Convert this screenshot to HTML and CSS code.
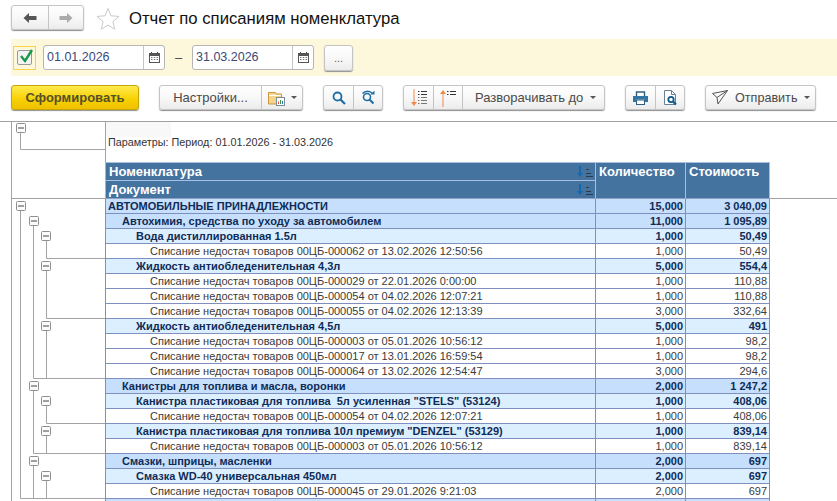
FILE: index.html
```html
<!DOCTYPE html>
<html lang="ru">
<head>
<meta charset="utf-8">
<title>Отчет по списаниям номенклатура</title>
<link rel="stylesheet" href="styles.css">
</head>
<body>
<header class="top">
  <div class="btn nav">
    <span class="seg w37"><svg width="14" height="12" viewBox="0 0 14 12"><path d="M0.5 6 6 1v3h7.5v4H6v3z" fill="#555"/></svg></span>
    <span class="seg w36"><svg width="14" height="12" viewBox="0 0 14 12"><path d="M13.5 6 8 1v3H.5v4H8v3z" fill="#ababab"/></svg></span>
  </div>
  <svg class="star" width="24" height="23" viewBox="0 0 24 23"><path d="M12 1.5l3 7.3 7.9.6-6 5.1 1.900 7.700L12 18.100l-6.800 4.100 1.900-7.700-6-5.100 7.900-.6z" fill="#fff" stroke="#c9c9c9"/></svg>
  <h1 class="title">Отчет по списаниям номенклатура</h1>
</header>

<section class="filter">
  <span class="check"><span class="checkbox"><svg width="16" height="15" viewBox="0 0 16 15"><path d="M3 7l4 5 7-11" fill="none" stroke="#17984a" stroke-width="2.400"/></svg></span></span>
  <div class="date"><span class="date-text">01.01.2026</span><span class="date-icon"><svg width="11" height="11" viewBox="0 0 11 11"><path d="M2.500 0v2M8.500 0v2" stroke="#444"/><rect x=".5" y="1.500" width="10" height="9" fill="#fff" stroke="#555"/><path d="M0 1h11v3H0z" fill="#555"/><path d="M2 5.500h1.500M4.800 5.500h1.500M7.600 5.500h1.500M2 7.500h1.500M4.800 7.500h1.500M7.600 7.500h1.500" stroke="#777"/></svg></span></div>
  <span class="dash">–</span>
  <div class="date"><span class="date-text">31.03.2026</span><span class="date-icon"><svg width="11" height="11" viewBox="0 0 11 11"><path d="M2.500 0v2M8.500 0v2" stroke="#444"/><rect x=".5" y="1.500" width="10" height="9" fill="#fff" stroke="#555"/><path d="M0 1h11v3H0z" fill="#555"/><path d="M2 5.500h1.500M4.800 5.500h1.500M7.600 5.500h1.500M2 7.500h1.500M4.800 7.500h1.500M7.600 7.500h1.500" stroke="#777"/></svg></span></div>
  <div class="btn dots">...</div>
</section>

<nav class="toolbar">
  <div class="btn primary">Сформировать</div>
  <div class="btn">
    <span class="seg w102">Настройки...</span>
    <span class="seg w42 gapped">
      <svg width="18" height="16" viewBox="0 0 18 16"><path d="M.5 2.500h7l1 1.500h5v10H.5z" fill="#f5d48c" stroke="#c9973f"/><path d="M1 5.500h12" stroke="#fff"/><rect x="8.500" y="7.500" width="8" height="8" fill="#fff" stroke="#7a8a99"/><path d="M10.500 14v-2.500" stroke="#d8503a"/><path d="M12.500 14v-4" stroke="#3a9a4a"/><path d="M14.500 14v-3" stroke="#3a72b8"/></svg>
      <i class="caret"></i>
    </span>
  </div>
  <div class="btn">
    <span class="seg w30"><svg width="14" height="14" viewBox="0 0 14 14"><circle cx="5.500" cy="5.500" r="4" fill="none" stroke="#1c6ea4" stroke-width="1.800"/><path d="M8.500 8.500l4.500 4.500" stroke="#1c6ea4" stroke-width="2.200"/></svg></span>
    <span class="seg w30"><svg width="15" height="15" viewBox="0 0 15 15"><circle cx="6" cy="7" r="3.500" fill="none" stroke="#1c6ea4" stroke-width="1.600"/><path d="M8.500 9.500l4 4" stroke="#1c6ea4" stroke-width="2"/><path d="M1.500 3.500C4 0.500 9 .5 11.500 3.500" fill="none" stroke="#1c6ea4" stroke-width="1.400"/><path d="M9.500 4.500h4v-4z" fill="#1c6ea4"/></svg></span>
  </div>
  <div class="btn">
    <span class="seg w30"><svg width="16" height="18" viewBox="0 0 16 18"><path d="M3 0v15" stroke="#ef8a4a"/><path d="M0 13h6l-3 4z" fill="#ef8a4a"/><path d="M7 2.500h1.500M10 2.500h6M7 5.500h1.500M10 5.500h6" stroke="#333"/><path d="M7 8.500h1.500M10 8.500h6M7 11.500h1.500M10 11.500h6M7 14.500h1.500M10 14.500h6" stroke="#777"/></svg></span>
    <span class="seg w30 up"><svg width="16" height="18" viewBox="0 0 16 18"><path d="M3 3v15" stroke="#ef8a4a"/><path d="M0 5h6l-3-4z" fill="#ef8a4a"/><path d="M7 2.500h1.500M10 2.500h6M7 5.500h1.500M10 5.500h6" stroke="#333"/></svg></span>
    <span class="seg w142">Разворачивать до<i class="caret after"></i></span>
  </div>
  <div class="btn">
    <span class="seg w30"><svg width="15" height="14" viewBox="0 0 15 14"><path d="M3.500 5V1h8v4" fill="#fff" stroke="#30607f" stroke-width="1.400"/><path d="M0 5h15v6h-3V8.500H3V11H0z" fill="#2f75a5"/><rect x="3.500" y="9" width="8" height="4.500" fill="#fff" stroke="#30607f"/></svg></span>
    <span class="seg w30"><svg width="15" height="16" viewBox="0 0 15 16"><path d="M1.500 .5h7l4 4V14.500h-11z" fill="#fff" stroke="#6a8093"/><path d="M8.500 .5v4h4" fill="none" stroke="#6a8093"/><circle cx="8" cy="9.500" r="2.700" fill="#fff" stroke="#0f5a8a" stroke-width="1.800"/><path d="M10 11.500l3 3" stroke="#0f5a8a" stroke-width="2.200"/></svg></span>
  </div>
  <div class="btn send">
    <svg width="16" height="15" viewBox="0 0 16 15"><path d="M.5 3.500L15.500 .5 6 14 5 7.500zM5 7.500L15.500 .5" fill="none" stroke="#555"/></svg>
    <span>Отправить</span>
    <i class="caret"></i>
  </div>
</nav>

<main class="report">
  <svg class="tree" width="94" height="379" viewBox="11 122 94 379">
    <g class="tree-lines">
      <path d="M11.500 122V501"/>
      <path d="M20.500 133V149.500H105"/>
      <path d="M11 198.500H105"/>
      <path d="M20.500 211V498.500H105"/>
      <path d="M33.500 226V378.500H105M33.500 391V453.500H105M33.500 466V498"/>
      <path d="M46.500 241V258.500H105M46.500 271V318.500H105M46.500 331V378M46.500 406V423.500H105M46.500 436V453M46.500 481V498"/>
    </g>
    <g class="tree-box">
      <rect x="16.500" y="123.500" width="9" height="9" rx="1"/><path d="M18 128h6"/>
      <rect x="16.500" y="201.500" width="9" height="9" rx="1"/><path d="M18 206h6"/>
      <rect x="29.500" y="216.500" width="9" height="9" rx="1"/><path d="M31 221h6"/>
      <rect x="41.500" y="231.500" width="9" height="9" rx="1"/><path d="M43 236h6"/>
      <rect x="41.500" y="261.500" width="9" height="9" rx="1"/><path d="M43 266h6"/>
      <rect x="41.500" y="321.500" width="9" height="9" rx="1"/><path d="M43 326h6"/>
      <rect x="29.500" y="381.500" width="9" height="9" rx="1"/><path d="M31 386h6"/>
      <rect x="41.500" y="396.500" width="9" height="9" rx="1"/><path d="M43 401h6"/>
      <rect x="41.500" y="426.500" width="9" height="9" rx="1"/><path d="M43 431h6"/>
      <rect x="29.500" y="456.500" width="9" height="9" rx="1"/><path d="M31 461h6"/>
      <rect x="41.500" y="471.500" width="9" height="9" rx="1"/><path d="M43 476h6"/>
    </g>
  </svg>

  <div class="sheet">
    <div class="params">
      <div class="params-blank"></div>
      <p class="params-text">Параметры: Период: 01.01.2026 - 31.03.2026</p>
    </div>
    <div class="head">
      <div class="hcell hname first">Номенклатура<svg width="17" height="12" viewBox="0 0 17 12"><path d="M3 0v8" stroke="#1468b0" stroke-width="2"/><path d="M0 7h6l-3 4z" fill="#1468b0"/><path d="M9 3.500h3M9 7.500h5M9 10.500h7" stroke="#2b3b4b"/></svg></div>
      <div class="hcell hnum qty">Количество</div>
      <div class="hcell hnum cost">Стоимость</div>
      <div class="hcell hname second">Документ<svg width="17" height="12" viewBox="0 0 17 12"><path d="M3 0v8" stroke="#1468b0" stroke-width="2"/><path d="M0 7h6l-3 4z" fill="#1468b0"/><path d="M9 3.500h3M9 7.500h5M9 10.500h7" stroke="#2b3b4b"/></svg></div>
    </div>
    <div class="row l0"><span>АВТОМОБИЛЬНЫЕ ПРИНАДЛЕЖНОСТИ</span><span>15,000</span><span>3 040,09</span></div>
    <div class="row l1"><span>Автохимия, средства по уходу за автомобилем</span><span>11,000</span><span>1 095,89</span></div>
    <div class="row l2"><span>Вода дистиллированная 1.5л</span><span>1,000</span><span>50,49</span></div>
    <div class="row l3"><span>Списание недостач товаров 00ЦБ-000062 от 13.02.2026 12:50:56</span><span>1,000</span><span>50,49</span></div>
    <div class="row l2"><span>Жидкость антиобледенительная 4,3л</span><span>5,000</span><span>554,4</span></div>
    <div class="row l3"><span>Списание недостач товаров 00ЦБ-000029 от 22.01.2026 0:00:00</span><span>1,000</span><span>110,88</span></div>
    <div class="row l3"><span>Списание недостач товаров 00ЦБ-000054 от 04.02.2026 12:07:21</span><span>1,000</span><span>110,88</span></div>
    <div class="row l3"><span>Списание недостач товаров 00ЦБ-000055 от 04.02.2026 12:13:39</span><span>3,000</span><span>332,64</span></div>
    <div class="row l2"><span>Жидкость антиобледенительная 4,5л</span><span>5,000</span><span>491</span></div>
    <div class="row l3"><span>Списание недостач товаров 00ЦБ-000003 от 05.01.2026 10:56:12</span><span>1,000</span><span>98,2</span></div>
    <div class="row l3"><span>Списание недостач товаров 00ЦБ-000017 от 13.01.2026 16:59:54</span><span>1,000</span><span>98,2</span></div>
    <div class="row l3"><span>Списание недостач товаров 00ЦБ-000064 от 13.02.2026 12:54:47</span><span>3,000</span><span>294,6</span></div>
    <div class="row l1"><span>Канистры для топлива и масла, воронки</span><span>2,000</span><span>1 247,2</span></div>
    <div class="row l2"><span>Канистра пластиковая для топлива&nbsp; 5л усиленная "STELS" (53124)</span><span>1,000</span><span>408,06</span></div>
    <div class="row l3"><span>Списание недостач товаров 00ЦБ-000054 от 04.02.2026 12:07:21</span><span>1,000</span><span>408,06</span></div>
    <div class="row l2"><span>Канистра пластиковая для топлива 10л премиум "DENZEL" (53129)</span><span>1,000</span><span>839,14</span></div>
    <div class="row l3"><span>Списание недостач товаров 00ЦБ-000003 от 05.01.2026 10:56:12</span><span>1,000</span><span>839,14</span></div>
    <div class="row l1"><span>Смазки, шприцы, масленки</span><span>2,000</span><span>697</span></div>
    <div class="row l2"><span>Смазка WD-40 универсальная 450мл</span><span>2,000</span><span>697</span></div>
    <div class="row l3"><span>Списание недостач товаров 00ЦБ-000045 от 29.01.2026 9:21:03</span><span>2,000</span><span>697</span></div>
    <div class="row l1"><span></span><span></span><span></span></div>
  </div>
  <div class="filler"></div>
</main>
</body>
</html>
```

FILE: styles.css
```css
* { box-sizing: border-box; }
html, body { margin: 0; height: 501px; overflow: hidden; background: #fff; }
body { font-family: "Liberation Sans", Arial, sans-serif; color: #333; }

.top { height: 39px; padding: 5px 0 0 11px; display: flex; align-items: flex-start; }
.star { margin: 2px 0 0 12px; }
.title { margin: 3px 0 0 9px; font-size: 16.700px; line-height: 21px; font-weight: 400; color: #111; }

.btn {
  display: flex; align-items: stretch; height: 25px;
  border: 1px solid #c4c4c4; border-radius: 3px;
  background: linear-gradient(#fff, #f8f8f8 50%, #ececec);
  box-shadow: 0 1px 1px #8f8f8f;
  font-size: 13px; color: #4a4a4a;
}
.seg { display: flex; align-items: center; justify-content: center; border-left: 1px solid #c4c4c4; }
.seg:first-child { border-left: 0; }
.up { align-items: flex-start; padding-top: 3px; }
.w30 { width: 29px; }
.w36 { width: 35px; }
.w37 { width: 36px; }
.w42 { width: 41px; }
.w102 { width: 101px; }
.w142 { width: 142px; justify-content: flex-start; padding-left: 12px; }
.gapped { gap: 5px; }
.caret { display: block; width: 0; height: 0; border: 3px solid transparent; border-top: 3px solid #555; border-bottom: 0; }
.after { margin-left: 7px; }

.filter { height: 37px; margin-left: 11px; padding-left: 2px; display: flex; align-items: center; background: #fdf8dc; }
.check { width: 23px; height: 24px; border: 1px solid #f6d34a; display: flex; align-items: center; justify-content: center; margin-right: 7px; }
.checkbox { width: 15px; height: 15px; border: 1px solid #9a9a9a; border-radius: 2px; background: #f4f4f4; position: relative; }
.checkbox svg { position: absolute; left: 0; top: -2px; }
.date { width: 122px; height: 25px; display: flex; border: 1px solid #b5b5b5; border-radius: 3px; background: #fff; }
.date-text { flex: 1; padding-left: 3px; font-size: 12.500px; line-height: 23px; color: #3b4a78; }
.date-icon { width: 21px; border-left: 1px solid #c4c4c4; display: flex; align-items: center; justify-content: center; }
.dash { width: 27px; text-align: center; font-size: 13px; color: #444; }
.dots { width: 29px; height: 26px; margin-left: 10px; justify-content: center; font-size: 11px; line-height: 24px; color: #666; }

.toolbar { height: 26px; margin: 9px 0 10px 11px; display: flex; gap: 20px; }
.primary { width: 128px; justify-content: center; align-items: center; font-weight: 700; color: #55502a; border-color: #c8a800; background: linear-gradient(#feea4e, #f6d000 60%, #efc000); }
.send { width: 111px; align-items: center; padding-left: 6px; gap: 7px; font-size: 12.600px; }

.report { height: 380px; border-top: 1px solid #a0a0a0; padding-left: 11px; display: flex; align-items: flex-start; }
.tree { display: block; flex: none; }
.tree-lines path { fill: none; stroke: #a3a3a3; }
.tree-box rect { fill: #fbfbfb; stroke: #8f8f8f; }
.tree-box path { stroke: #444; fill: none; }

.sheet { width: 665px; flex: none; }
.params { height: 40px; border-left: 1px solid #a3a3a3; padding-left: 2px; position: relative; }
.params-blank { position: absolute; left: 0; top: 0; width: 65px; height: 15px; background: #f8f8f8; }
.params-text { margin: 0; padding-top: 14px; font-size: 10.800px; line-height: 12px; color: #333; }

.head {
  height: 37px; display: grid; grid-template-columns: 491px 90px 84px; grid-template-rows: 18px 18px;
  background: #45739f; color: #fff; font-size: 13px; font-weight: 700;
  border-top: 1px solid #a9bfe0;
}
.hcell { border-right: 1px solid #a9bfe0; }
.hname { padding: 0 1px 0 3px; border-left: 1px solid #9fb6d8; display: flex; justify-content: space-between; align-items: center; line-height: 16px; }
.first { grid-column: 1; grid-row: 1; border-bottom: 1px solid #a9bfe0; }
.second { grid-column: 1; grid-row: 2; border-bottom: 1px solid #8fa0c4; }
.hnum { grid-row: 1 / 3; padding: 1px 0 0 3px; line-height: 16px; border-bottom: 1px solid #8fa0c4; }
.qty { grid-column: 2; }
.cost { grid-column: 3; }

.row { height: 15px; display: grid; grid-template-columns: 490px 90px 84px; font-size: 11px; line-height: 14px; white-space: nowrap; border-left: 1px solid #7f8fc0; border-bottom: 1px solid #7f8fc0; }
.row span { border-right: 1px solid #7f8fc0; padding-right: 2px; text-align: right; overflow: hidden; }
.row span:first-child { text-align: left; padding-right: 0; }
.l0 span:first-child { padding-left: 2px; }
.l1 span:first-child { padding-left: 16px; }
.l2 span:first-child { padding-left: 30px; }
.l3 span:first-child { padding-left: 44px; }
.l0, .l1 { background: #c6dffc; font-weight: 700; color: #0f2c57; }
.l2 { background: #dcefff; font-weight: 700; color: #0f2c57; }
.l3 { background: #fff; color: #3a3a3a; }

.filler { flex: 1; height: 77px; border-bottom: 1px solid #a3a3a3; }
```
